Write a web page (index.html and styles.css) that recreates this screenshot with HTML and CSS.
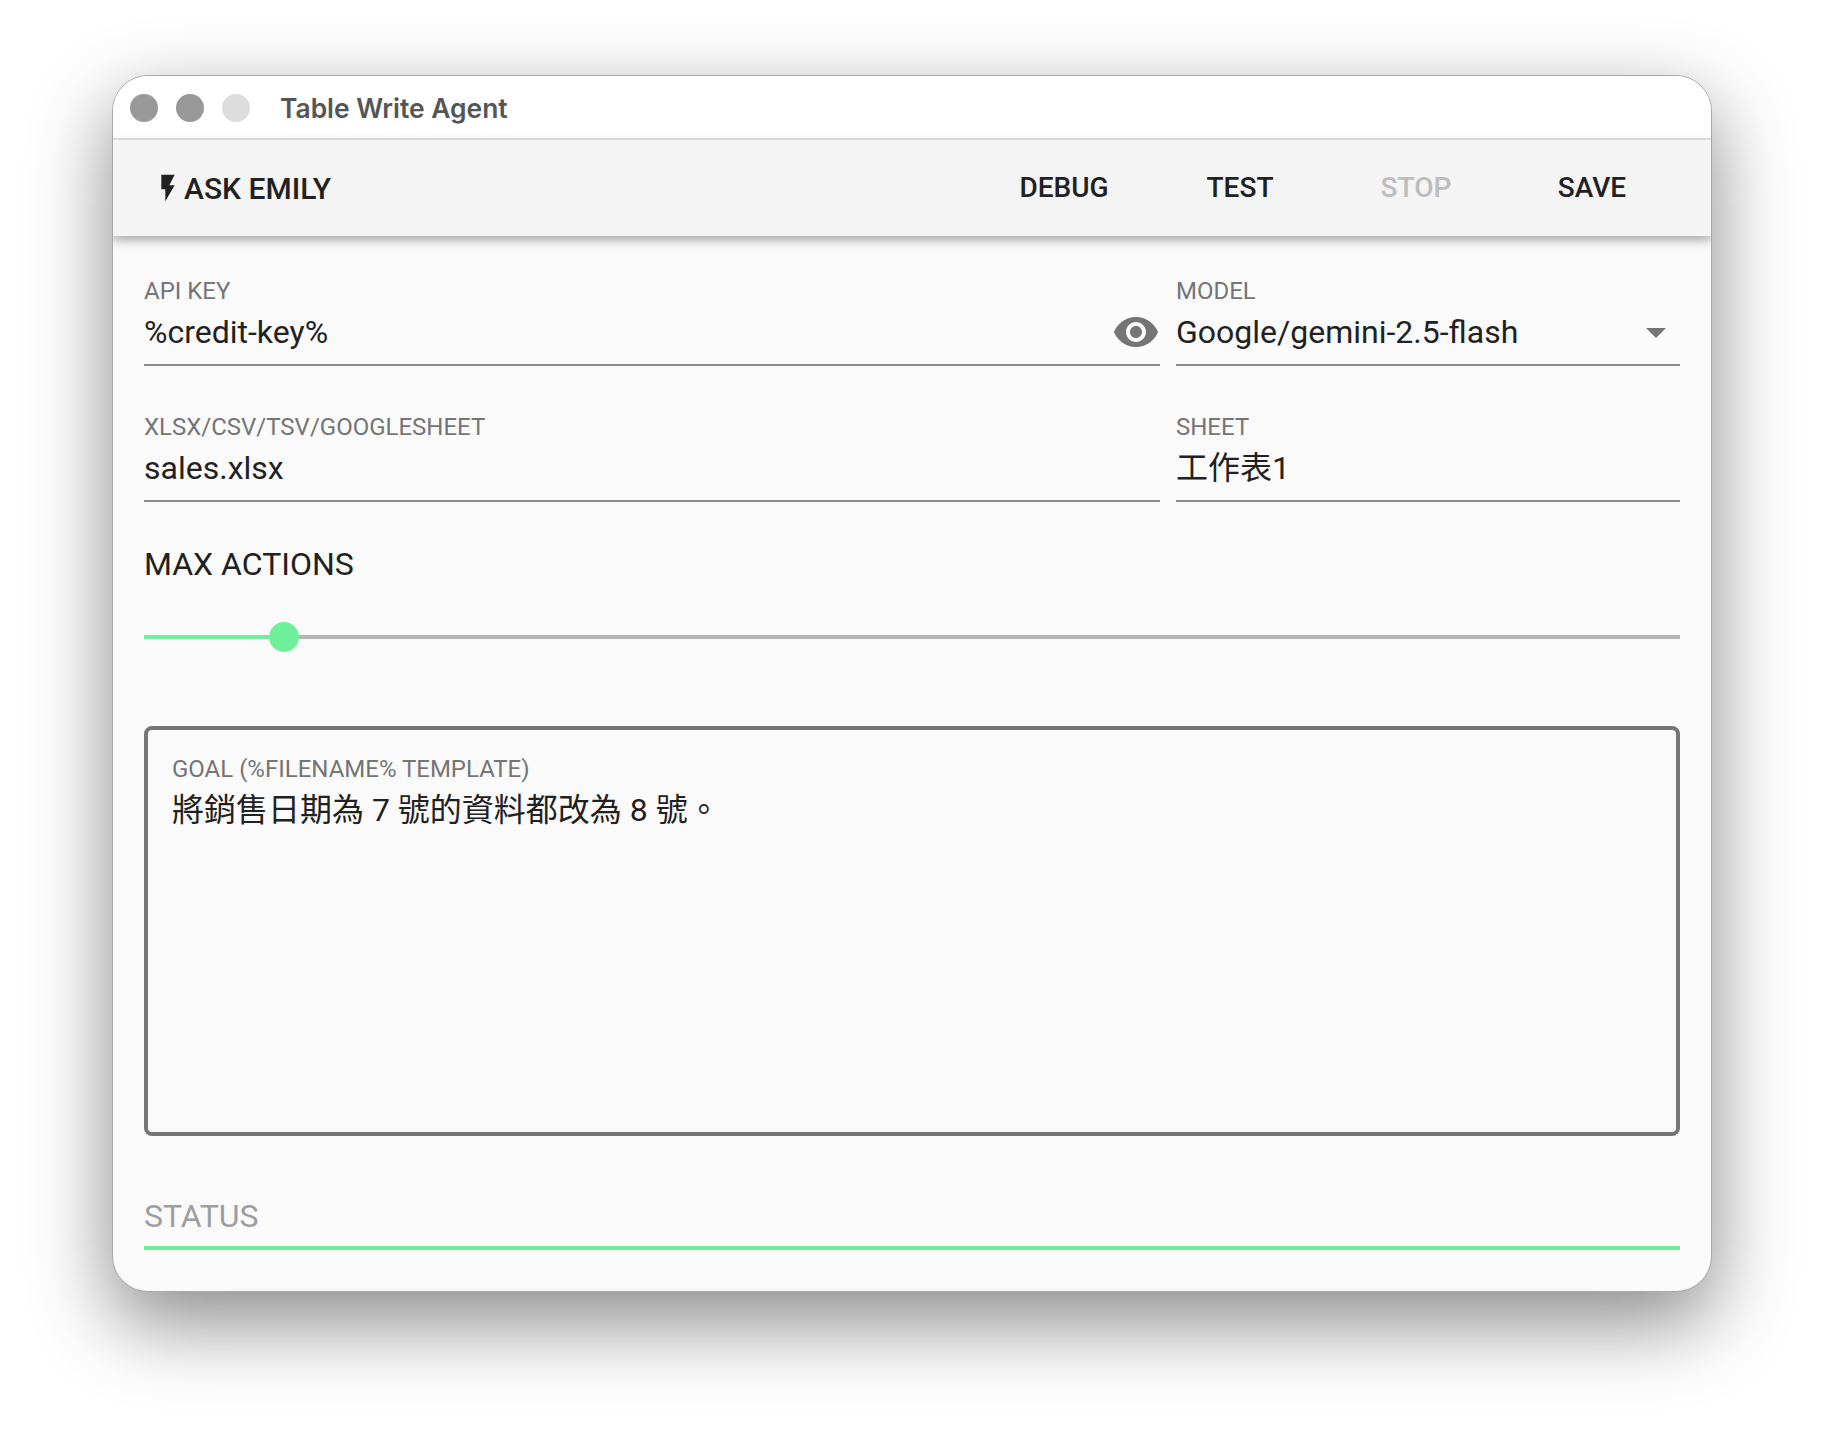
FILE: index.html
```html
<!DOCTYPE html>
<html lang="en">
<head>
  <meta charset="utf-8">
  <meta name="viewport" content="width=device-width, initial-scale=1.0">
  <title>Table Write Agent</title>
  <link rel="stylesheet" href="styles.css">
</head>
<body>
  <div class="window">
    <div class="titlebar">
      <span class="light"></span>
      <span class="light"></span>
      <span class="light light-off"></span>
      <span class="title">Table Write Agent</span>
    </div>

    <div class="toolbar">
      <div class="ask">
        <svg class="bolt" viewBox="0 0 24 24"><path d="M7 2v11h3v9l7-12h-4l4-8z"/></svg>
        <span>ASK EMILY</span>
      </div>
      <div class="actions">
        <span class="action">DEBUG</span>
        <span class="action">TEST</span>
        <span class="action action-off">STOP</span>
        <span class="action">SAVE</span>
      </div>
    </div>

    <div class="content">
      <div class="row">
        <div class="field">
          <div class="label">API KEY</div>
          <div class="value">
            <span>%credit-key%</span>
            <svg class="field-icon" viewBox="0 0 24 24"><path d="M12 4.5C7 4.5 2.73 7.61 1 12c1.73 4.39 6 7.5 11 7.5s9.27-3.11 11-7.5c-1.73-4.39-6-7.5-11-7.5zM12 17c-2.76 0-5-2.24-5-5s2.24-5 5-5 5 2.24 5 5-2.24 5-5 5zm0-8c-1.66 0-3 1.34-3 3s1.34 3 3 3 3-1.34 3-3-1.34-3-3-3z"/></svg>
          </div>
        </div>
        <div class="field">
          <div class="label">MODEL</div>
          <div class="value">
            <span>Google/gemini-2.5-flash</span>
            <svg class="field-icon" viewBox="0 0 24 24"><path d="M7 10l5 5 5-5z"/></svg>
          </div>
        </div>
      </div>

      <div class="row row-last">
        <div class="field">
          <div class="label">XLSX/CSV/TSV/GOOGLESHEET</div>
          <div class="value"><span>sales.xlsx</span></div>
        </div>
        <div class="field">
          <div class="label">SHEET</div>
          <div class="value"><span>工作表1</span></div>
        </div>
      </div>

      <div class="slider-title">MAX ACTIONS</div>
      <div class="slider">
        <div class="slider-fill"></div>
        <div class="slider-thumb"></div>
        <div class="slider-rest"></div>
      </div>

      <div class="goal">
        <div class="label">GOAL (%FILENAME% TEMPLATE)</div>
        <div class="goal-text">將銷售日期為 7 號的資料都改為 8 號。</div>
      </div>

      <div class="status">STATUS</div>
    </div>
  </div>
</body>
</html>
```

FILE: styles.css
```css
body {
  margin: 0;
  min-height: 100vh;
  box-sizing: border-box;
  padding: 75px 112px;
  background: #fff;
  font-family: Roboto, "Noto Sans CJK TC", sans-serif;
  color: #212121;
}

.window {
  width: 1600px;
  height: 1217px;
  box-sizing: border-box;
  border: 1px solid #a8a8a8;
  border-radius: 36px;
  overflow: hidden;
  background: #fafafa;
  box-shadow: 0 30px 80px 2px rgba(0, 0, 0, 0.45);
}

.titlebar {
  height: 61px;
  display: flex;
  align-items: center;
  padding-left: 17px;
  padding-top: 1px;
  background: #fff;
  border-bottom: 2px solid #e6e6e6;
}

.light {
  width: 28px;
  height: 28px;
  margin-right: 18px;
  border-radius: 50%;
  background: #999;
}

.light-off {
  background: #ddd;
}

.title {
  margin-left: 12px;
  font-family: Inter, sans-serif;
  font-size: 26.4px;
  font-weight: 600;
  color: #555;
}

.toolbar {
  position: relative;
  height: 96px;
  display: flex;
  align-items: center;
  justify-content: space-between;
  padding: 0 31px;
  background: #f4f4f4;
  box-shadow: 0 4px 10px rgba(0, 0, 0, 0.35);
}

.ask {
  display: flex;
  align-items: center;
  font-size: 30px;
  font-weight: 500;
}

.bolt {
  width: 32px;
  height: 32px;
  margin-left: 8px;
  fill: #212121;
}

.actions {
  display: flex;
  padding-bottom: 2px;
}

.action {
  width: 176px;
  text-align: center;
  font-size: 28px;
  font-weight: 500;
}

.action-off {
  color: #bdbdbd;
}

.content {
  padding: 40px 31px 0;
}

.row {
  display: grid;
  grid-template-columns: 1016px 504px;
  column-gap: 16px;
  margin-bottom: 46px;
}

.row-last {
  margin-bottom: 42px;
}

.field {
  height: 90px;
  border-bottom: 2px solid #8c8c8c;
  box-sizing: border-box;
}

.label {
  height: 30px;
  line-height: 30px;
  font-size: 24px;
  color: #757575;
}

.value {
  display: flex;
  align-items: center;
  justify-content: space-between;
  height: 52px;
  font-size: 32px;
  line-height: 44px;
}

.field-icon {
  width: 48px;
  height: 48px;
  fill: #757575;
}

.slider-title {
  font-size: 32px;
  line-height: 40px;
}

.slider {
  display: flex;
  align-items: center;
  height: 30px;
  margin-top: 38px;
}

.slider-fill {
  width: 125px;
  height: 4px;
  background: #6ef09b;
}

.slider-thumb {
  width: 30px;
  height: 30px;
  border-radius: 50%;
  background: #6ef09b;
}

.slider-rest {
  flex: 1;
  height: 4px;
  background: #b5b5b5;
}

.goal {
  height: 410px;
  margin-top: 74px;
  padding: 24px 24px;
  box-sizing: border-box;
  border: 4px solid #757575;
  border-radius: 8px;
}

.goal-text {
  margin-top: 4px;
  font-size: 32px;
  line-height: 44px;
}

.status {
  margin-top: 58px;
  padding-bottom: 8px;
  font-size: 32px;
  line-height: 44px;
  color: #9e9e9e;
  border-bottom: 4px solid #6ef09b;
}
```
